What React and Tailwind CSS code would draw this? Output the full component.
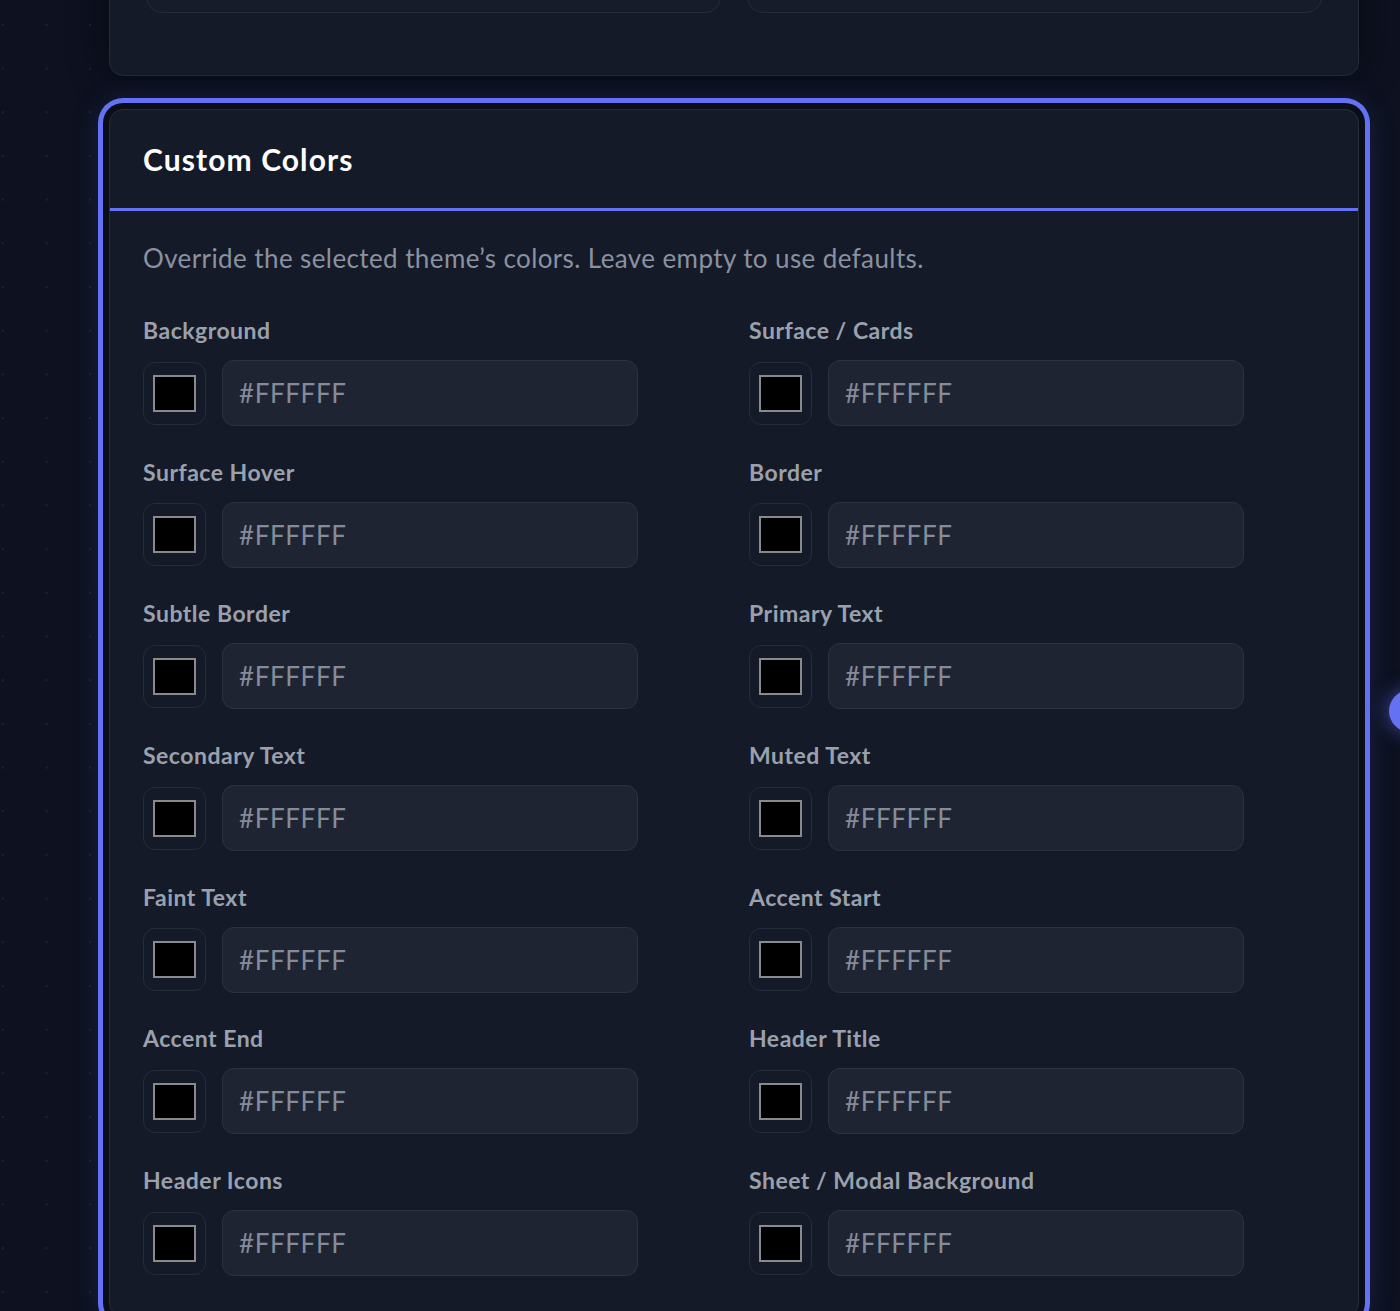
import React from 'react';

// --- field list ---
const FIELDS = [
  ['Background', 'Surface / Cards'],
  ['Surface Hover', 'Border'],
  ['Subtle Border', 'Primary Text'],
  ['Secondary Text', 'Muted Text'],
  ['Faint Text', 'Accent Start'],
  ['Accent End', 'Header Title'],
  ['Header Icons', 'Sheet / Modal Background'],
];

const ColorField = ({ label }) => (
  <div className="flex flex-col">
    <label className="text-[23px] leading-[30px] font-bold tracking-[0.5px] text-[#9aa1ad] mb-[15px]">{label}</label>
    <div className="flex items-center gap-4">
      <div className="w-[63px] h-[63px] rounded-[12px] border border-[#262c3a] bg-[#151a28] flex items-center justify-center">
        <div className="w-[43px] h-[37px] bg-black border-2 border-[#8a8a8a]" />
      </div>
      <input
        type="text"
        placeholder="#FFFFFF"
        className="w-[416px] h-[66px] rounded-[12px] border border-[#2c3242] bg-[#1f2433] px-4 text-[26px] tracking-[0.6px] text-[#c9ced6] placeholder:text-[#858c99] outline-none"
        style={{ fontFamily: 'inherit' }}
      />
    </div>
  </div>
);

export default function App() {
  return (
    <div
      className="min-h-screen h-[1311px] overflow-hidden relative bg-[#0d1120] bg-[radial-gradient(circle,#1e2434_1.2px,transparent_1.5px)] bg-[size:43.7px_43.7px] bg-[position:-19px_3px]"
      style={{ fontFamily: 'Lato, "Open Sans", sans-serif' }}
    >
      <div className="pl-[109px] w-[1359px] flex flex-col">
        {/* previous card, scrolled mostly out of view */}
        <div className="-mt-[120px] rounded-[14px] border border-[#252b39] bg-[#151a28] shadow-[0_0_40px_rgba(0,0,0,0.45)] px-[36px] pt-[40px] pb-[62px] grid grid-cols-2 gap-[26px]">
          <div className="h-[92px] rounded-[16px] border border-[#262c3a] bg-[#171c2a]" />
          <div className="h-[92px] rounded-[16px] border border-[#262c3a] bg-[#171c2a]" />
        </div>

        {/* custom colors card */}
        <div className="mt-[33px] rounded-[14px] border border-[#262c3a] bg-[#151a28] ring-[5px] ring-[#6471f2] ring-offset-[6px] ring-offset-[#0a0e19] shadow-[0_0_34px_rgba(90,105,240,0.35)]">
          <div className="h-[101px] px-[33px] flex items-center border-b-[3px] border-[#6471f2]">
            <h2 className="text-[30px] font-bold text-white tracking-[1.1px]">Custom Colors</h2>
          </div>
          <div className="px-[33px] pt-[29px] pb-10">
            <p className="text-[26px] leading-[36px] tracking-[0.4px] text-[#8a91a0] mb-[39px]">
              Override the selected theme’s colors. Leave empty to use defaults.
            </p>
            <div className="flex flex-col gap-[30.7px]">
              {FIELDS.map(([a, b]) => (
                <div key={a} className="grid grid-cols-[606px_1fr]">
                  <ColorField label={a} />
                  <ColorField label={b} />
                </div>
              ))}
            </div>
          </div>
        </div>
      </div>

      {/* floating handle on the right edge */}
      <div className="absolute left-[1389px] top-[690px] w-[42px] h-[42px] rounded-full bg-[#6471f2] shadow-[0_0_20px_rgba(100,113,242,0.6)]" />
    </div>
  );
}
